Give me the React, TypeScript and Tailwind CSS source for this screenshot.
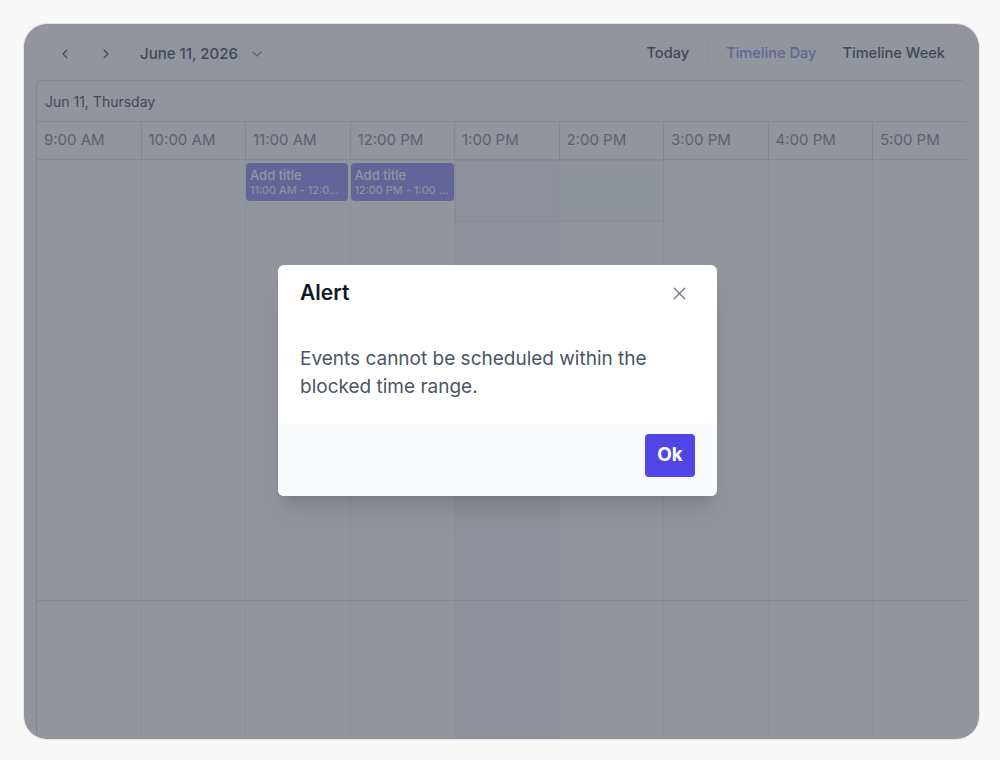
import React from 'react'
import { ChevronDown, ChevronLeft, ChevronRight, X } from 'lucide-react'

const hours = ['9:00 AM', '10:00 AM', '11:00 AM', '12:00 PM', '1:00 PM', '2:00 PM', '3:00 PM', '4:00 PM', '5:00 PM', '6:00 PM']

const App: React.FC = () => {
  return (
    <div
      className="flex h-[760px] w-[1000px] bg-[#f8f8f8] pl-[23px] pt-[23px]"
      style={{ fontFamily: 'Inter, "Noto Sans", sans-serif' }}
    >
      <div className="relative h-[717px] w-[957px] overflow-hidden rounded-[24px] border border-[#e6e6e6] bg-white">
        <div className="flex h-full flex-col px-[12px]">
          {/* toolbar */}
          <div className="flex h-[56px] shrink-0 items-center pt-[4px]">
            <button type="button" className="ml-[21px] text-gray-500">
              <ChevronLeft className="h-4 w-4" strokeWidth={1.75} />
            </button>
            <button type="button" className="ml-[25px] text-gray-500">
              <ChevronRight className="h-4 w-4" strokeWidth={1.75} />
            </button>
            <div className="ml-[26px] flex items-center text-[15px] font-medium text-gray-500">
              June 11, 2026
              <ChevronDown className="ml-[11px] h-4 w-4 text-gray-400" strokeWidth={1.75} />
            </div>
            <div className="ml-auto flex items-center text-[14.6px] font-medium">
              <span className="text-gray-500">Today</span>
              <span className="mx-[18px] h-[24px] w-px bg-gray-100" />
              <span className="text-[#a3a6f7]">Timeline Day</span>
              <span className="ml-[26px] mr-[22px] text-gray-500">Timeline Week</span>
            </div>
          </div>

          {/* grid */}
          <div className="flex min-h-0 flex-1 flex-col overflow-hidden rounded-t-[6px] border-l border-t border-gray-200">
            <div className="flex h-[41px] shrink-0 items-center border-b border-gray-200 pl-[8px] text-[14px] text-gray-500">
              Jun 11, Thursday
            </div>
            <div className="flex h-[38px] shrink-0 border-b border-gray-200">
              {hours.map((h) => (
                <div
                  key={h}
                  className="flex w-[104.5px] shrink-0 items-center border-r border-gray-200 pl-[7px] text-[15px] text-gray-400"
                >
                  {h}
                </div>
              ))}
            </div>
            <div className="relative flex h-[441px] shrink-0 border-b border-gray-200">
              {hours.map((h, i) => (
                <div
                  key={h}
                  className={`w-[104.5px] shrink-0 border-r border-gray-100 ${i === 4 ? 'bg-gray-100/70' : ''}`}
                />
              ))}
              <div className="absolute left-[418px] top-0 h-[62px] w-[209px] border border-gray-200/70 bg-gray-100/40" />
              <div className="absolute left-[209px] top-[3px] flex h-[38px] w-[102px] flex-col justify-center rounded-[4px] bg-[#a7a4fb] px-[4px] text-white">
                <span className="text-[13px] font-medium leading-[16px]">Add title</span>
                <span className="truncate text-[11px] leading-[14px]">11:00 AM - 12:00 PM</span>
              </div>
              <div className="absolute left-[313.5px] top-[3px] flex h-[38px] w-[103px] flex-col justify-center rounded-[4px] bg-[#a7a4fb] px-[4px] text-white">
                <span className="text-[13px] font-medium leading-[16px]">Add title</span>
                <span className="truncate text-[11px] leading-[14px]">12:00 PM - 1:00 PM</span>
              </div>
            </div>
            <div className="flex flex-1">
              {hours.map((h, i) => (
                <div
                  key={h}
                  className={`w-[104.5px] shrink-0 border-r border-gray-100 ${i === 4 ? 'bg-gray-100/70' : ''}`}
                />
              ))}
            </div>
          </div>
        </div>

        {/* overlay */}
        <div className="absolute inset-0 bg-[#111827]/[0.46]" />

        {/* dialog */}
        <div className="absolute inset-0 flex items-start justify-center">
          <div
            role="dialog"
            aria-modal="true"
            className="ml-[-8px] mt-[241px] w-[439px] overflow-hidden rounded-[6px] bg-white shadow-xl"
          >
            <div className="flex items-center justify-between pl-[22px] pr-[27px] pt-[16px]">
              <h2 className="text-[21px] font-semibold leading-[24px] text-gray-900">Alert</h2>
              <button type="button" className="text-gray-500">
                <X className="h-[21px] w-[21px]" strokeWidth={1.5} />
              </button>
            </div>
            <p className="px-[22px] pb-[23px] pt-[40px] text-[19px] leading-[28px] text-gray-600">
              Events cannot be scheduled within the blocked time range.
            </p>
            <div className="flex justify-end bg-gray-50 pb-[19px] pl-[22px] pr-[22px] pt-[10px]">
              <button
                type="button"
                className="h-[43px] w-[50px] rounded-[4px] bg-[#4f46e5] text-[19px] font-bold text-white"
              >
                Ok
              </button>
            </div>
          </div>
        </div>
      </div>
    </div>
  )
}

export default App
